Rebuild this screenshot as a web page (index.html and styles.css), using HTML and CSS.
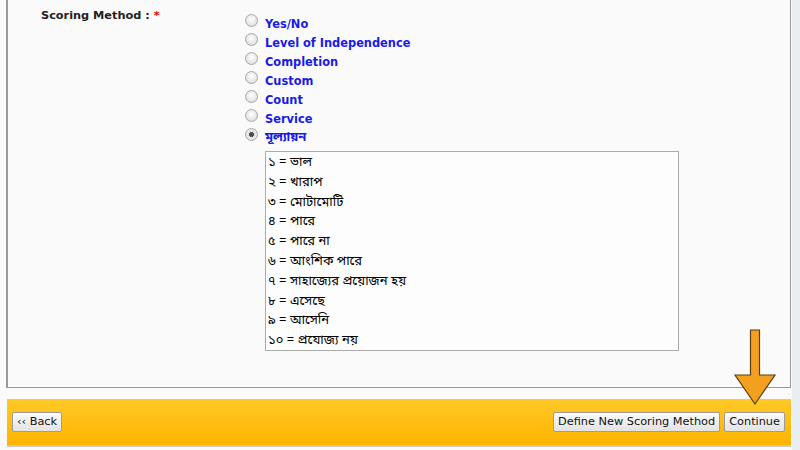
FILE: index.html
```html
<!DOCTYPE html>
<html>
<head>
<meta charset="utf-8">
<link rel="stylesheet" href="styles.css">
</head>
<body>
<div class="page">
  <div class="panel">
    <div class="form-row">
      <div class="label">Scoring Method : <span class="req">*</span></div>
      <div class="options">
        <label class="opt"><input type="radio" name="sm"><span>Yes/No</span></label>
        <label class="opt"><input type="radio" name="sm"><span>Level of Independence</span></label>
        <label class="opt"><input type="radio" name="sm"><span>Completion</span></label>
        <label class="opt"><input type="radio" name="sm"><span>Custom</span></label>
        <label class="opt"><input type="radio" name="sm"><span>Count</span></label>
        <label class="opt"><input type="radio" name="sm"><span>Service</span></label>
        <label class="opt"><input type="radio" name="sm" checked><span class="bn">মূল্যায়ন</span></label>
        <div class="listbox">
          <div class="item">১ = ভাল</div>
          <div class="item">২ = খারাপ</div>
          <div class="item">৩ = মোটামোটি</div>
          <div class="item">৪ = পারে</div>
          <div class="item">৫ = পারে না</div>
          <div class="item">৬ = আংশিক পারে</div>
          <div class="item">৭ = সাহাজ্যের প্রয়োজন হয়</div>
          <div class="item">৮ = এসেছে</div>
          <div class="item">৯ = আসেনি</div>
          <div class="item">১০ = প্রযোজ্য নয়</div>
        </div>
      </div>
    </div>
  </div>
  <div class="actionbar">
    <button class="btn">&lsaquo;&lsaquo; Back</button>
    <div class="right-btns">
      <button class="btn">Define New Scoring Method</button>
      <button class="btn">Continue</button>
    </div>
  </div>
  <svg class="arrow" width="44" height="78" viewBox="0 0 44 78">
    <polygon points="17.5,1 26.5,1 26.5,46 42,46 22,75 2,46 17.5,46" fill="#f3a020" stroke="#5a4010" stroke-width="1.2" stroke-linejoin="miter"/>
  </svg>
</div>
</body>
</html>
```

FILE: styles.css
```css
html, body {
  margin: 0;
  padding: 0;
  background: #e9eef2;
}
.page {
  position: relative;
  width: 792px;
  height: 450px;
  background: #fafafa;
}
.panel {
  margin-left: 6px;
  width: 785px;
  height: 388px;
  box-sizing: border-box;
  border-left: 2px solid #9a9a9a;
  border-right: 1px solid #9a9a9a;
  border-bottom: 1px solid #9a9a9a;
  background: #fafafa;
}
.form-row {
  display: flex;
  padding-top: 8px;
}
.label {
  width: 237px;
  padding-left: 33px;
  box-sizing: border-box;
  font-family: "DejaVu Sans", Verdana, sans-serif;
  font-weight: bold;
  font-size: 11.3px;
  color: #222;
  line-height: 16px;
}
.req {
  color: #e00;
}
.options {
  display: flex;
  flex-direction: column;
  padding-top: 6px;
}
.opt {
  display: flex;
  align-items: center;
  height: 19px;
  font-family: "DejaVu Sans", Verdana, sans-serif;
  font-weight: bold;
  font-size: 11.4px;
  color: #1a1ae6;
}
.opt input {
  appearance: none;
  -webkit-appearance: none;
  width: 13px;
  height: 13px;
  margin: 0 7px 0 0;
  border-radius: 50%;
  border: 1px solid #a8a8a8;
  background: radial-gradient(circle at 50% 40%, #ffffff 0%, #e6e6e6 60%, #cfcfcf 100%);
  box-sizing: border-box;
  position: relative;
  top: -3px;
}
.opt input:checked {
  background: radial-gradient(circle, #444 0, #555 2.2px, #e0e0e0 2.8px, #f4f4f4 100%);
}
.opt .bn {
  font-family: "Noto Sans Bengali", "Noto Sans", sans-serif;
  font-size: 13px;
  font-weight: bold;
}
.listbox {
  margin-left: 20px;
  margin-top: 4px;
  width: 414px;
  height: 200px;
  box-sizing: border-box;
  border: 1px solid #ababab;
  background: #fdfdfd;
  padding-top: 1px;
  font-family: "Noto Sans Bengali", "Noto Sans", sans-serif;
  font-size: 13px;
  color: #000;
}
.item {
  height: 19.8px;
  line-height: 19px;
  padding-left: 2px;
}
.actionbar {
  margin-left: 7px;
  margin-top: 11px;
  width: 784px;
  height: 48px;
  box-sizing: border-box;
  border-bottom: 2px solid #c9c9c9;
  background: linear-gradient(#ffc927, #ffb400);
  display: flex;
  justify-content: space-between;
  align-items: center;
  padding: 0 6px 0 5px;
}
.right-btns {
  display: flex;
  gap: 4px;
}
.btn {
  font-family: "DejaVu Sans", sans-serif;
  font-size: 11.3px;
  color: #111;
  height: 20px;
  padding: 0 4px;
  border: 1px solid #9c9c9c;
  border-radius: 2px;
  background: linear-gradient(#fbfbfb, #e3e3e3);
  line-height: 18px;
}
.arrow {
  position: absolute;
  left: 733px;
  top: 329px;
}
```
